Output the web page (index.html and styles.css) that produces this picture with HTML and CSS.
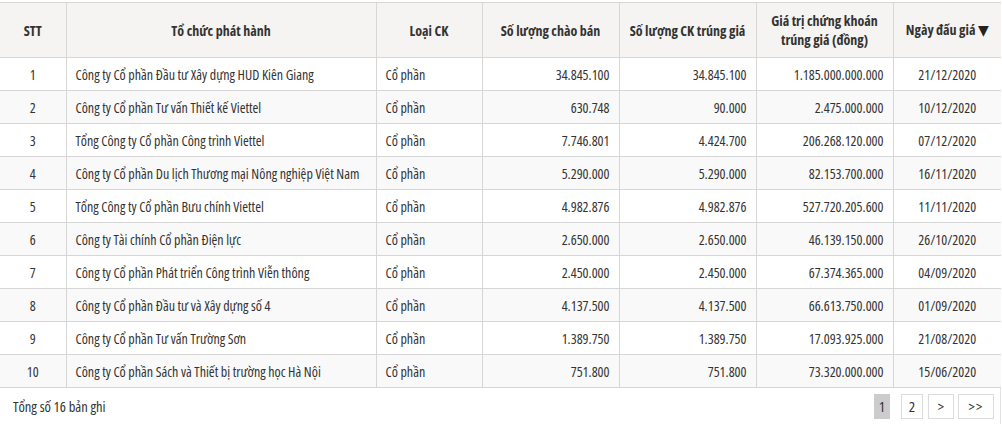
FILE: index.html
```html
<!DOCTYPE html>
<html lang="vi">
<head>
<meta charset="utf-8">
<title>Kết quả đấu giá</title>
<link rel="stylesheet" href="styles.css">
</head>
<body>
<div class="wrap">
  <table class="grid">
    <colgroup>
      <col class="c-stt"><col class="c-org"><col class="c-type"><col class="c-num"><col class="c-num"><col class="c-num"><col class="c-date">
    </colgroup>
    <thead>
      <tr>
        <th class="first">STT</th>
        <th>Tổ chức phát hành</th>
        <th>Loại CK</th>
        <th>Số lượng chào bán</th>
        <th>Số lượng CK trúng giá</th>
        <th>Giá trị chứng khoán<br>trúng giá (đồng)</th>
        <th class="last">Ngày đấu giá <span class="sort">▼</span></th>
      </tr>
    </thead>
    <tbody>
      <tr><td class="first ctr">1</td><td>Công ty Cổ phần Đầu tư Xây dựng HUD Kiên Giang</td><td>Cổ phần</td><td class="r">34.845.100</td><td class="r">34.845.100</td><td class="r">1.185.000.000.000</td><td class="last ctr">21/12/2020</td></tr>
      <tr><td class="first ctr">2</td><td>Công ty Cổ phần Tư vấn Thiết kế Viettel</td><td>Cổ phần</td><td class="r">630.748</td><td class="r">90.000</td><td class="r">2.475.000.000</td><td class="last ctr">10/12/2020</td></tr>
      <tr><td class="first ctr">3</td><td>Tổng Công ty Cổ phần Công trình Viettel</td><td>Cổ phần</td><td class="r">7.746.801</td><td class="r">4.424.700</td><td class="r">206.268.120.000</td><td class="last ctr">07/12/2020</td></tr>
      <tr><td class="first ctr">4</td><td>Công ty Cổ phần Du lịch Thương mại Nông nghiệp Việt Nam</td><td>Cổ phần</td><td class="r">5.290.000</td><td class="r">5.290.000</td><td class="r">82.153.700.000</td><td class="last ctr">16/11/2020</td></tr>
      <tr><td class="first ctr">5</td><td>Tổng Công ty Cổ phần Bưu chính Viettel</td><td>Cổ phần</td><td class="r">4.982.876</td><td class="r">4.982.876</td><td class="r">527.720.205.600</td><td class="last ctr">11/11/2020</td></tr>
      <tr><td class="first ctr">6</td><td>Công ty Tài chính Cổ phần Điện lực</td><td>Cổ phần</td><td class="r">2.650.000</td><td class="r">2.650.000</td><td class="r">46.139.150.000</td><td class="last ctr">26/10/2020</td></tr>
      <tr><td class="first ctr">7</td><td>Công ty Cổ phần Phát triển Công trình Viễn thông</td><td>Cổ phần</td><td class="r">2.450.000</td><td class="r">2.450.000</td><td class="r">67.374.365.000</td><td class="last ctr">04/09/2020</td></tr>
      <tr><td class="first ctr">8</td><td>Công ty Cổ phần Đầu tư và Xây dựng số 4</td><td>Cổ phần</td><td class="r">4.137.500</td><td class="r">4.137.500</td><td class="r">66.613.750.000</td><td class="last ctr">01/09/2020</td></tr>
      <tr><td class="first ctr">9</td><td>Công ty Cổ phần Tư vấn Trường Sơn</td><td>Cổ phần</td><td class="r">1.389.750</td><td class="r">1.389.750</td><td class="r">17.093.925.000</td><td class="last ctr">21/08/2020</td></tr>
      <tr><td class="first ctr">10</td><td>Công ty Cổ phần Sách và Thiết bị trường học Hà Nội</td><td>Cổ phần</td><td class="r">751.800</td><td class="r">751.800</td><td class="r">73.320.000.000</td><td class="last ctr">15/06/2020</td></tr>
    </tbody>
  </table>
  <div class="footer">
    <span class="total">Tổng số 16 bản ghi</span>
    <nav class="pager">
      <span class="pg active">1</span>
      <span class="pg p2">2</span>
      <span class="pg p3">&gt;</span>
      <span class="pg p4">&gt;&gt;</span>
    </nav>
  </div>
</div>
</body>
</html>
```

FILE: styles.css
```css
html, body {
  margin: 0;
  padding: 0;
  background: #fff;
}
body {
  font-family: "Liberation Sans Narrow", "Open Sans", "Liberation Sans", sans-serif;
  font-stretch: 75%;
  font-size: 14px;
  color: #333;
}
.wrap {
  width: 1001px;
  padding-top: 2px;
}
.grid {
  width: 1001px;
  border-collapse: collapse;
  table-layout: fixed;
}
.c-stt { width: 66px; }
.c-org { width: 310px; }
.c-type { width: 106px; }
.c-num { width: 137px; }
.c-date { width: 108px; }
.grid th, .grid td {
  border: 1px solid #d6d6d6;
  padding: 0 9px;
  white-space: nowrap;
  overflow: hidden;
}
.grid th {
  height: 54px;
  background: #f5f4f2;
  font-weight: bold;
  text-align: center;
  line-height: 19px;
}
.grid td {
  height: 32px;
  text-align: left;
}
.grid tbody tr:nth-child(even) td {
  background: #f9f9f9;
}
.grid .first { border-left: none; }
.grid .last { border-right: none; }
.grid .ctr { text-align: center; }
.grid .r { text-align: right; }
.sort {
  font-family: "DejaVu Sans", sans-serif;
  font-stretch: normal;
  font-size: 14px;
  color: #222;
}
.footer {
  display: flex;
  align-items: center;
  justify-content: space-between;
  height: 36px;
  border-right: 1px solid #e2e2e2;
}
.total {
  padding-left: 13px;
  font-size: 14.5px;
}
.pager {
  display: flex;
  padding-right: 6px;
  font-size: 15px;
}
.pg {
  box-sizing: border-box;
  height: 25px;
  border: 1px solid #dcdcdc;
  display: flex;
  align-items: center;
  justify-content: center;
  background: #fff;
}
.pg.active {
  width: 16px;
  background: #cccccc;
  border-color: #cccccc;
}
.pg.p2 { width: 22px; margin-left: 11px; }
.pg.p3 { width: 26px; margin-left: 5px; }
.pg.p4 { width: 36px; margin-left: 4px; letter-spacing: 1px; }
```
